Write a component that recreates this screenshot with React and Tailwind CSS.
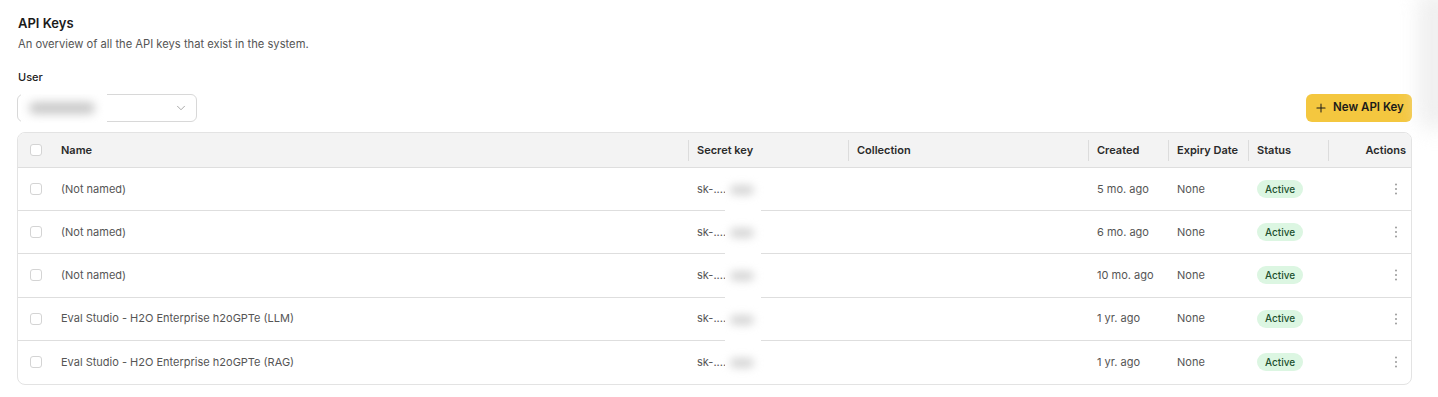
import React from 'react';
import { ChevronDown, Plus } from 'lucide-react';

const rows = [
  { name: '(Not named)', created: '5 mo. ago' },
  { name: '(Not named)', created: '6 mo. ago' },
  { name: '(Not named)', created: '10 mo. ago' },
  { name: 'Eval Studio - H2O Enterprise h2oGPTe (LLM)', created: '1 yr. ago' },
  { name: 'Eval Studio - H2O Enterprise h2oGPTe (RAG)', created: '1 yr. ago' },
];

const cols = 'grid grid-cols-[34px_636px_160px_240px_80px_80px_80px_83px]';

function Checkbox() {
  return <span className="block w-[12px] h-[12px] rounded-[3px] border border-[#d4d4d4] bg-white" />;
}

function Kebab() {
  return (
    <svg width="4" height="14" viewBox="0 0 4 14" className="text-[#9a9a9a]">
      <circle cx="2" cy="2.5" r="1" fill="currentColor" />
      <circle cx="2" cy="7" r="1" fill="currentColor" />
      <circle cx="2" cy="11.5" r="1" fill="currentColor" />
    </svg>
  );
}

function HeaderCell({ children, sep = true, right = false }) {
  return (
    <div className={`relative flex items-center h-full px-[9px] ${right ? 'justify-end pr-[5px]' : ''}`}>
      {sep && <span className="absolute left-0 top-[7px] bottom-[6px] w-px bg-[#dcdcdc]" />}
      {children}
    </div>
  );
}

export default function App() {
  return (
    <div className="relative w-[1438px] h-[397px] bg-white overflow-hidden px-[17px] pt-[14px] text-[#333] font-['Inter','Liberation_Sans',sans-serif]">
      {/* faint edge shadow */}
      <div className="absolute right-[-14px] top-[-10px] w-[34px] h-[140px] rounded-full bg-[#e9e9e9] blur-[10px] opacity-70" />

      <h1 className="text-[13px] leading-[18px] font-semibold text-[#1a1a1a] pl-px">API Keys</h1>
      <p className="mt-[4px] text-[11.2px] leading-[16px] text-[#555] pl-px">An overview of all the API keys that exist in the system.</p>
      <div className="mt-[17px] text-[11px] leading-[16px] font-medium text-[#222] pl-px">User</div>

      <div className="mt-[9px] w-[1395px] flex items-center justify-between">
        <div className="relative w-[180px] h-[28px] rounded-[6px] border border-[#d8d8d8] bg-white flex items-center justify-end pr-[8px]">
          <div className="absolute left-[3px] top-[-1px] w-[86px] h-[29px] bg-white overflow-hidden">
            <div className="absolute left-[8px] top-[8px] w-[66px] h-[12px] rounded-full bg-[#c9c9c9] blur-[5px]" />
          </div>
          <ChevronDown size={14} strokeWidth={1.25} className="text-[#8a8a8a]" />
        </div>
        <button className="w-[106px] h-[28px] rounded-[6px] bg-[#f4c73f] flex items-center justify-center gap-[5px] text-[11.5px] font-semibold text-[#1a1a1a]">
          <Plus size={14} strokeWidth={1.75} />
          New API Key
        </button>
      </div>

      <div className="relative mt-[10px] w-[1395px] rounded-[8px] border border-[#e3e3e3] overflow-hidden">
        <div className={`${cols} h-[35px] bg-[#f3f3f3] border-b border-[#dedede] text-[11px] font-semibold text-[#2a2a2a]`}>
          <div className="flex items-center pl-[12px]"><Checkbox /></div>
          <HeaderCell sep={false}>Name</HeaderCell>
          <HeaderCell>Secret key</HeaderCell>
          <HeaderCell>Collection</HeaderCell>
          <HeaderCell>Created</HeaderCell>
          <HeaderCell>Expiry Date</HeaderCell>
          <HeaderCell>Status</HeaderCell>
          <HeaderCell right>Actions</HeaderCell>
        </div>
        {rows.map((r, i) => (
          <div
            key={i}
            className={`${cols} h-[43.2px] text-[11px] text-[#555] ${i < rows.length - 1 ? 'border-b border-[#dedede]' : ''}`}
          >
            <div className="flex items-center pl-[12px]"><Checkbox /></div>
            <div className="flex items-center px-[9px]">{r.name}</div>
            <div className="flex items-center px-[9px]">sk-....</div>
            <div />
            <div className="flex items-center px-[9px]">{r.created}</div>
            <div className="flex items-center px-[9px]">None</div>
            <div className="flex items-center px-[9px]">
              <span className="inline-flex items-center h-[18px] px-[8px] rounded-full bg-[#dcf6e2] text-[10px] font-medium text-[#22502e]">Active</span>
            </div>
            <div className="flex items-center justify-end pr-[13px]"><Kebab /></div>
          </div>
        ))}

        {/* redacted key values */}
        <div className="absolute left-[707px] top-[43px] w-[36px] h-[204px] bg-white">
          {rows.map((_, i) => (
            <div
              key={i}
              className="absolute left-[5px] w-[24px] h-[10px] rounded-full bg-[#d6d6d6] blur-[4px]"
              style={{ top: `${9 + i * 43.2}px` }}
            />
          ))}
        </div>
      </div>
    </div>
  );
}
